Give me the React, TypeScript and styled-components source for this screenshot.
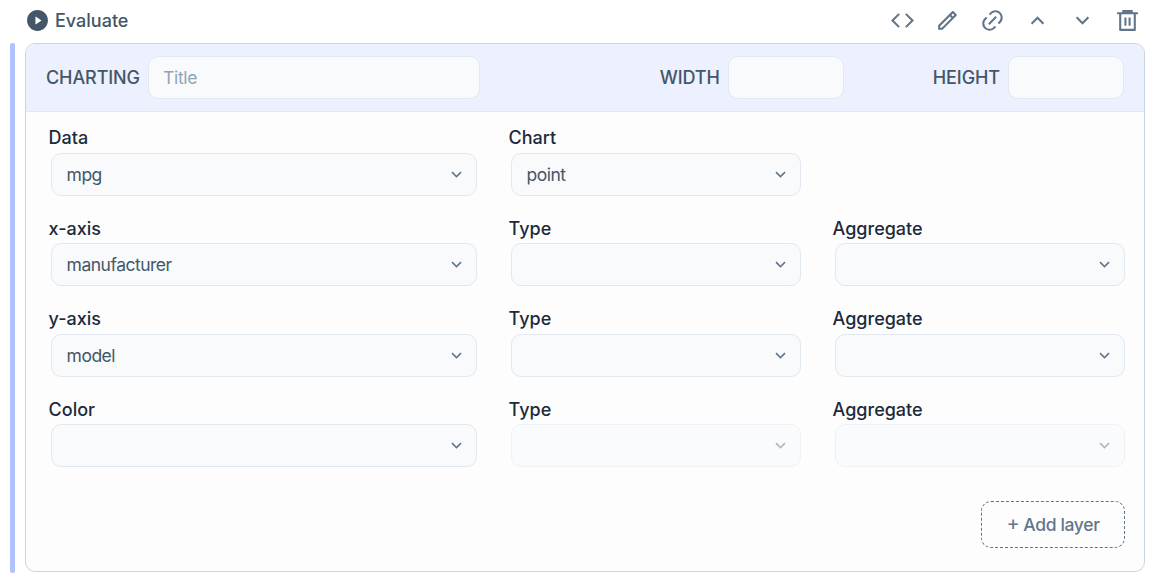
import React from "react";
import styled, { createGlobalStyle } from "styled-components";
import {
  RiPlayCircleFill,
  RiCodeLine,
  RiPencilLine,
  RiLink,
  RiArrowUpSLine,
  RiArrowDownSLine,
  RiDeleteBin6Line,
} from "react-icons/ri";

const GlobalStyle = createGlobalStyle`
  *, *::before, *::after { box-sizing: border-box; }
  body {
    margin: 0;
    background: #fff;
    font-family: Inter, "Liberation Sans", sans-serif;
    font-size: 17.5px;
    line-height: 25px;
    color: #445668;
  }
  button, input { font: inherit; }
`;

const Page = styled.main`
  height: 583px;
  padding: 0 10px;
  overflow: hidden;
`;

const Toolbar = styled.header`
  height: 43px;
  padding: 0 5px 2px 15px;
  display: flex;
  align-items: center;
  justify-content: space-between;
`;

const EvaluateButton = styled.button`
  display: flex;
  align-items: center;
  gap: 5px;
  padding: 0;
  border: 0;
  background: none;
  color: #445668;
  font-size: 18px;
  font-weight: 500;
  svg { display: block; width: 25px; height: 25px; }
`;

const Actions = styled.div`
  display: flex;
  gap: 20px;
`;

const IconButton = styled.button`
  padding: 0;
  border: 0;
  background: none;
  color: #61758a;
  svg { display: block; width: 25px; height: 25px; }
`;

const Cell = styled.section`
  display: flex;
  gap: 10px;
`;

const FocusBar = styled.div`
  width: 5px;
  height: 530px;
  border-radius: 2px;
  background: #b2c1ff;
`;

const Card = styled.div`
  width: 1120px;
  height: 529px;
  border: 1px solid #cad5e0;
  border-radius: 10px;
  background: #fdfdfe;
  overflow: hidden;
`;

const CardHeader = styled.div`
  height: 68px;
  padding: 0 20px;
  display: flex;
  align-items: center;
  background: #ecf0ff;
  border-bottom: 1px solid #e1e8f0;
`;

const InlineField = styled.label`
  display: flex;
  align-items: center;
  gap: 8px;
  font-size: 18px;
  font-weight: 500;
  letter-spacing: -0.1px;
`;

const SizeFields = styled.div`
  display: flex;
  gap: 89px;
  margin-left: auto;
`;

const TextInput = styled.input<{ $width: number }>`
  width: ${(p) => p.$width}px;
  height: 43px;
  padding: 0 14px;
  border: 1px solid #e1e8f0;
  border-radius: 10px;
  background: #f8fafc;
  color: #445668;
  font-size: 17.5px;
  font-weight: 400;
  letter-spacing: -0.3px;
  outline: 0;
  &::placeholder { color: #91a4b7; opacity: 1; }
`;

const Fields = styled.div`
  display: grid;
  grid-template-columns: 428px 292px 292px;
  column-gap: 32px;
  row-gap: 19.8px;
  padding: 13.4px 18px 0 22.6px;
`;

const Field = styled.div`
  height: 70.6px;
`;

const FieldLabel = styled.div`
  height: 27.6px;
  line-height: 25px;
  font-size: 18px;
  font-weight: 500;
  color: #1c2a3a;
`;

const SelectBox = styled.button<{ $disabled?: boolean }>`
  width: calc(100% - 2.4px);
  height: 43px;
  margin-left: 2.4px;
  padding: 0 10px 0 14.6px;
  display: flex;
  align-items: center;
  justify-content: space-between;
  border: 1px solid #e1e8f0;
  border-radius: 10px;
  background: #f8fafc;
  color: #445668;
  text-align: left;
  letter-spacing: -0.5px;
  opacity: ${(p) => (p.$disabled ? 0.5 : 1)};
  svg { display: block; width: 19px; height: 19px; color: #61758a; }
`;

const Footer = styled.div`
  display: flex;
  justify-content: flex-end;
  padding: 33.8px 19px 0 0;
`;

const AddLayerButton = styled.button`
  width: 144px;
  height: 47px;
  padding: 0;
  display: flex;
  align-items: center;
  justify-content: center;
  gap: 4px;
  border: 1px dashed #61758a;
  border-radius: 10px;
  background: transparent;
  color: #61758a;
  font-weight: 500;
  letter-spacing: -0.35px;
`;

const Plus = styled.span`
  padding-bottom: 2px;
  font-size: 20px;
  font-weight: 400;
`;

type FieldSpec = { label: string; value?: string; disabled?: boolean } | null;

const fields: FieldSpec[] = [
  { label: "Data", value: "mpg" },
  { label: "Chart", value: "point" },
  null,
  { label: "x-axis", value: "manufacturer" },
  { label: "Type" },
  { label: "Aggregate" },
  { label: "y-axis", value: "model" },
  { label: "Type" },
  { label: "Aggregate" },
  { label: "Color" },
  { label: "Type", disabled: true },
  { label: "Aggregate", disabled: true },
];

const actions = [
  { name: "Source", Icon: RiCodeLine },
  { name: "Edit", Icon: RiPencilLine },
  { name: "Link", Icon: RiLink },
  { name: "Move up", Icon: RiArrowUpSLine },
  { name: "Move down", Icon: RiArrowDownSLine },
  { name: "Delete", Icon: RiDeleteBin6Line },
];

export default function App() {
  return (
    <>
      <GlobalStyle />
      <Page>
        <Toolbar>
          <EvaluateButton>
            <RiPlayCircleFill />
            <span>Evaluate</span>
          </EvaluateButton>
          <Actions>
            {actions.map(({ name, Icon }) => (
              <IconButton key={name} aria-label={name}>
                <Icon />
              </IconButton>
            ))}
          </Actions>
        </Toolbar>
        <Cell>
          <FocusBar />
          <Card>
            <CardHeader>
              <InlineField>
                CHARTING
                <TextInput $width={332} placeholder="Title" />
              </InlineField>
              <SizeFields>
                <InlineField>
                  WIDTH
                  <TextInput $width={116} />
                </InlineField>
                <InlineField>
                  HEIGHT
                  <TextInput $width={116} />
                </InlineField>
              </SizeFields>
            </CardHeader>
            <Fields>
              {fields.map((field, i) =>
                field ? (
                  <Field key={i}>
                    <FieldLabel>{field.label}</FieldLabel>
                    <SelectBox $disabled={field.disabled} aria-label={field.label}>
                      <span>{field.value}</span>
                      <RiArrowDownSLine />
                    </SelectBox>
                  </Field>
                ) : (
                  <Field key={i} />
                )
              )}
            </Fields>
            <Footer>
              <AddLayerButton>
                <Plus>+</Plus>
                <span>Add layer</span>
              </AddLayerButton>
            </Footer>
          </Card>
        </Cell>
      </Page>
    </>
  );
}
